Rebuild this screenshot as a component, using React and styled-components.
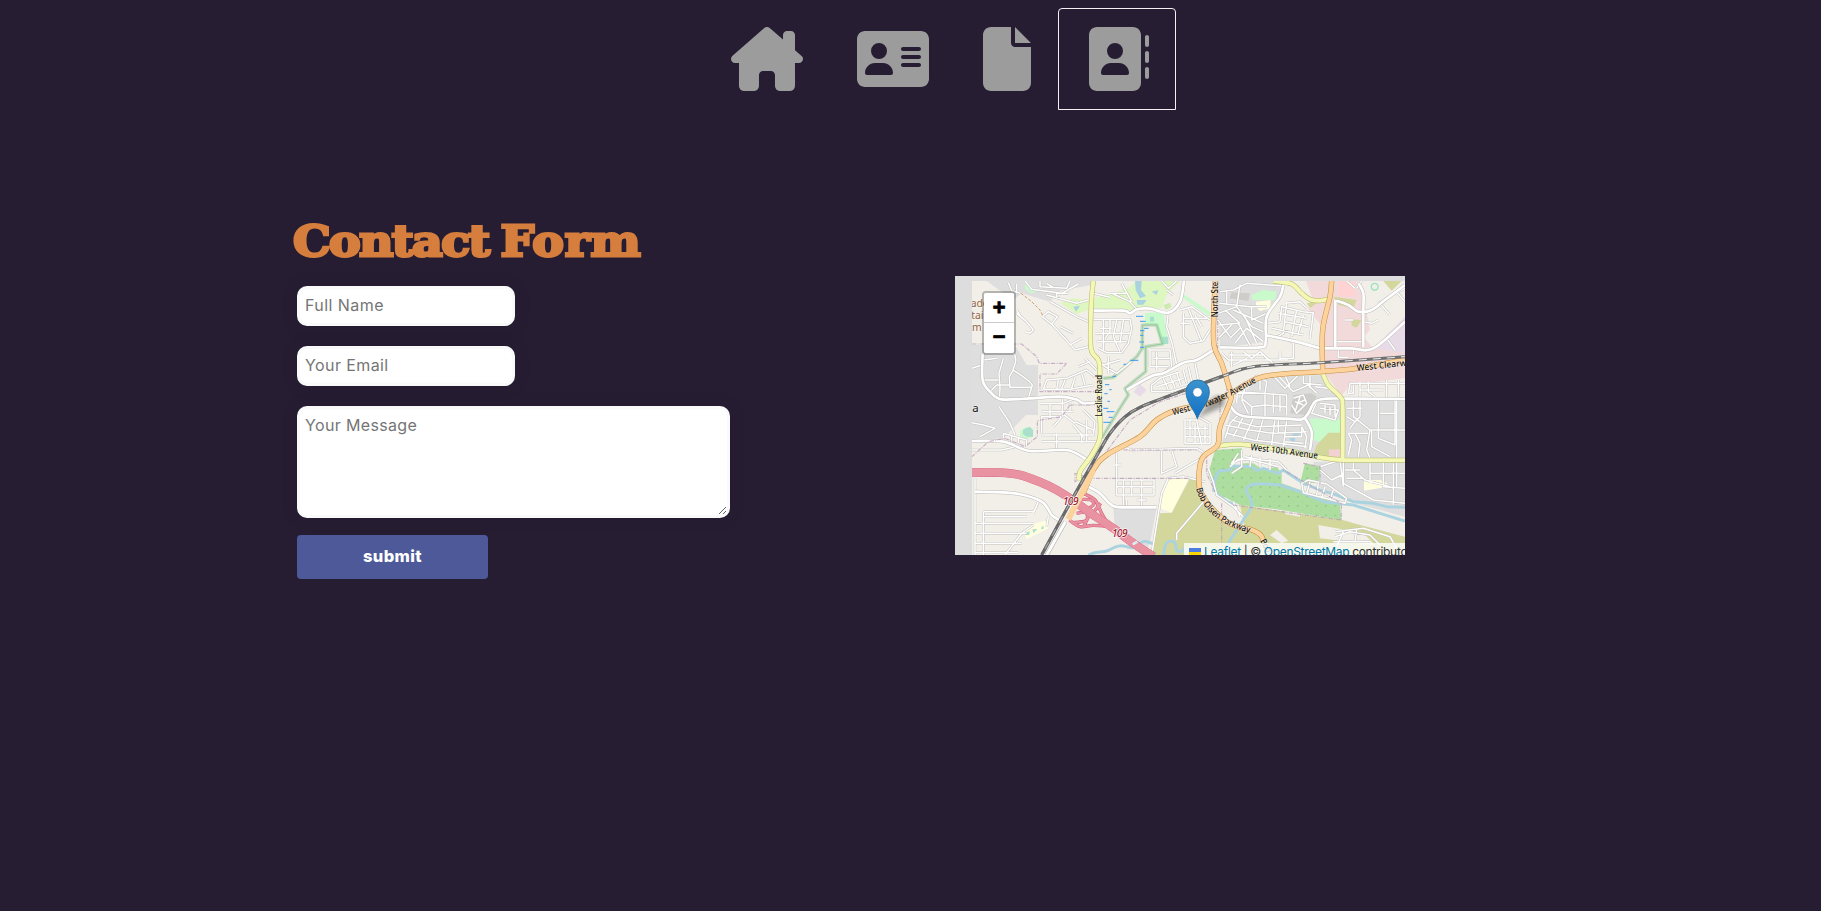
import React from "react";
import styled, { createGlobalStyle } from "styled-components";
import { FaHouseChimney, FaAddressCard, FaFile, FaAddressBook } from "react-icons/fa6";

const GlobalStyle = createGlobalStyle`
  * { box-sizing: border-box; }
  html, body { margin: 0; background: #271d33; }
  body { font-family: Inter, "Liberation Sans", sans-serif; overflow: hidden; }
`;

const Page = styled.div`
  min-height: 911px;
  background: #271d33;
`;

const Nav = styled.nav`
  display: flex;
  padding: 8px 0 0 704px;
`;

const NavLink = styled.a`
  display: flex;
  padding: 18px 26px;
  border: 1px solid ${(p) => (p.$active ? "#f4f2f5" : "transparent")};
  border-radius: 4px 4px 0 0;
  color: #9c9c9c;
  svg { display: block; height: 64px; width: ${(p) => p.$width}px; }
`;

const Main = styled.main`
  display: flex;
  align-items: flex-start;
  padding: 108px 0 0 293px;
`;

const FormColumn = styled.section`
  width: 662px;
`;

const Title = styled.h1`
  width: max-content;
  margin: 0;
  height: 68px;
  white-space: nowrap;
  font: 700 42px/47px "DejaVu Serif", serif;
  word-spacing: -4px;
  color: #d67e3d;
  -webkit-text-stroke: 2.8px #d67e3d;
  transform: scaleX(1.13);
  transform-origin: left;
`;

const Word = styled.span`
  letter-spacing: ${(p) => p.$tracking};
`;

const Form = styled.form`
  display: flex;
  flex-direction: column;
  align-items: flex-start;
  padding-left: 4px;
`;

const fieldStyle = `
  display: block;
  border: 3px solid #fafafa;
  border-radius: 10px;
  background: #fff;
  outline: none;
  box-shadow: 0 0 15px 4px rgba(0, 0, 0, 0.06);
  font: 400 16px/24px Inter, sans-serif;
  &::placeholder { color: #757575; opacity: 1; }
`;

const Input = styled.input`
  ${fieldStyle}
  width: 218px;
  height: 40px;
  margin-bottom: 20px;
  padding: 0 5px 2px;
  letter-spacing: ${(p) => p.$tracking};
`;

const Message = styled.textarea`
  ${fieldStyle}
  width: 433px;
  height: 112px;
  margin-bottom: 17px;
  padding: 4px 5px;
  letter-spacing: 0.35px;
  resize: both;
`;

const Submit = styled.button`
  width: 191px;
  height: 44px;
  padding: 0 0 2px;
  border: 0;
  border-radius: 4px;
  background: #4d5998;
  color: #fff;
  font: 800 16.5px/24px Inter, sans-serif;
  letter-spacing: 0.4px;
`;

const MapFrame = styled.div`
  position: relative;
  width: 450px;
  height: 279px;
  margin-top: 58px;
  overflow: hidden;
  background: #ddd;
`;

const MapSvg = styled.svg`
  display: block;
  width: 450px;
  height: 279px;
`;

const Zoom = styled.div`
  position: absolute;
  left: 27px;
  top: 15px;
  width: 34px;
  border: 2px solid rgba(0, 0, 0, 0.25);
  border-radius: 4px;
  background-clip: padding-box;
`;

const ZoomButton = styled.button`
  display: flex;
  align-items: center;
  justify-content: center;
  width: 30px;
  height: 30px;
  padding: ${(p) => (p.$first ? "3px 0 0" : "1px 0 0")};
  border: 0;
  border-bottom: ${(p) => (p.$first ? "1px solid #ccc" : "0")};
  border-radius: ${(p) => (p.$first ? "2px 2px 0 0" : "0 0 2px 2px")};
  background: #fff;
  color: #000;
  font: bold 22px/27px "Liberation Mono", monospace;
  -webkit-text-stroke: 0.8px #000;
`;

const Attribution = styled.div`
  position: absolute;
  left: 229px;
  top: 267px;
  display: flex;
  align-items: center;
  gap: 3px;
  height: 18px;
  padding: 0 5px;
  background: rgba(255, 255, 255, 0.8);
  color: #333;
  font: 400 12px/18px Inter, sans-serif;
  white-space: nowrap;
  letter-spacing: -0.3px;
  word-spacing: -0.2px;
  a { color: #0078a8; }
`;

const Flag = styled.svg`
  width: 12px;
  height: 8px;
  flex: none;
`;

/* Turns "x y x y ..." into a smooth path through every point. */
function curve(points) {
  const n = points.trim().split(/\s+/).map(Number);
  const p = [];
  for (let i = 0; i < n.length; i += 2) p.push([n[i], n[i + 1]]);
  let d = `M${p[0].join(" ")}`;
  for (let i = 0; i < p.length - 1; i++) {
    const a = p[i - 1] || p[i];
    const b = p[i];
    const c = p[i + 1];
    const e = p[i + 2] || c;
    d += `C${b[0] + (c[0] - a[0]) / 6} ${b[1] + (c[1] - a[1]) / 6} ${c[0] - (e[0] - b[0]) / 6} ${c[1] - (e[1] - b[1]) / 6} ${c[0]} ${c[1]}`;
  }
  return d;
}

/* Land cover: [fill, outline path]; map units are a third of a pixel. */
const LAND = [
  ["#dedede", "M66 225H195L230 285H264V435H228L160 505L66 510Z M110 33H425V45L330 62L300 95L215 70L190 90Z"],
  ["#dedede", "M803 33H975L1000 60L950 120L945 215L810 235Z M850 400L930 318L1112 316L1175 385V565L1085 560L815 520Z M1180 385H1365V740L1180 690L1105 650L1090 575H1180Z M490 712H620L600 820L585 850L495 785Z"],
  ["#f2dada", "M1068 33H1225L1250 130L1260 180L1240 200L1270 235H1365V325L1200 345L1175 378L1140 330L1110 300L1125 180L1075 120L1085 80Z"],
  ["#ffd3d2", "M1165 33H1212V80H1165Z"],
  ["#e8dbe8", "M1270 235L1365 140V250Z M570 342L590 360L570 380L550 365Z"],
  ["#def6c0", "M330 100L365 85L410 90L490 70L540 50L560 33H690L650 75L635 115L540 120L430 115L380 132Z"],
  ["#c8facc", "M690 65L780 125V140L700 85Z M905 75L940 60L980 65L976 90L905 90Z M225 42L260 65L245 70L225 58Z M585 130L640 125L655 220L635 228L620 165L585 162Z M1080 445L1170 448V490L1125 520L1088 510Z M210 483L230 470L250 478V500L225 507L210 498Z"],
  ["#d3d79c", "M720 625L745 630L760 680L840 755L930 780L965 820L1045 819L1110 790L1105 765L1160 745L1365 805V855H605L630 730L665 728Z M870 705L1174 750L1365 800V855H900Z M1100 525L1135 488H1170V565L1090 555Z M1150 80L1220 90L1210 115L1165 105Z M1205 148L1235 150L1220 173L1205 167Z M1300 33H1355L1325 62Z M1070 100L1110 92L1080 114Z"],
  ["#f2efe9", "M1105 765L1160 775L1240 790L1275 825L1110 805Z M1010 720L1050 718V740L1005 732Z M980 780L1015 812L995 820L960 795Z"],
  ["#addea0", "M795 540L875 535V560L835 600L880 580H910L940 600L980 590L995 610V640L1170 703L1174 750L1050 730L980 718L870 705L800 670L775 610Z M1065 580L1110 590L1107 638L1050 640Z"],
  ["#ffffe0", "M650 623L715 627L665 728L630 715Z M918 95L962 90L960 115L930 123L918 110Z M1242 630H1290L1312 640L1305 652L1242 662Z M222 790L240 765L285 752L295 775L230 808Z"],
  ["#aadfcb", "M220 478L240 470L249 480V500H230L218 492Z M224 790L240 784L237 795H226Z M247 778L262 777L250 790Z M275 770L281 768V776L273 778Z M600 140H612V155H600Z M635 200H655V222H640Z"],
  ["#aad3df", "M555 33H575L573 60L588 78L570 85L557 60Z M560 90H590L580 104H562Z M605 65L625 60L620 75Z M370 110L390 107L378 125Z M1007 495L1020 502L1030 492L1055 488L1035 502V523H1025L1020 508Z"],
  ["#cfcdca", "M845 67L900 70L895 93L838 85Z M1030 375L1085 370L1100 380L1065 435L1020 430Z"],
  ["#cdebb0", "M915 365L928 368L920 378Z M640 105L660 98L665 110L648 120Z"],
  ["#f3d1d3", "M1137 538H1170V560H1137Z"],
];

const WATER = [
  "M415 855C440 842 455 850 475 841S500 825 520 828S550 840 565 825S585 812 610 822M640 855L645 830C650 805 680 810 678 830S700 850 705 830",
  "M790 665C795 640 790 620 810 602L840 600L850 588L905 590L920 602L940 595L960 602L985 610L1000 600L1060 640L1115 662L1160 675L1210 695L1270 700L1310 710L1365 712",
  "M790 640L800 670L830 695L850 700M820 850L840 810L900 720C920 690 880 670 890 655S920 638 990 645L1050 665L1120 695L1210 705L1290 730L1365 753",
];

const MINOR = [
  // north west
  "M66 295L95 285M190 250C210 270 185 295 190 300S240 330 247 345L235 385M190 300L178 320L180 352H247M148 390L150 355L147 310L160 265M66 458L100 465L135 475L90 500M147 410L180 460L195 495M100 270L142 265M98 330L145 330M120 365L140 345H180",
  "M175 38L185 62L210 70M200 42V65M225 33L245 58L335 70L385 42M270 33V50L350 55L360 33M290 40L310 52M300 95L380 140L415 155M290 75L380 100L415 90M320 85V70H355",
  "M200 130L230 155L250 180L240 190L225 185M200 120L215 145M277 140L295 125L322 140L305 162L277 140M305 162L340 200L362 225L375 240L415 230M330 170L370 190M360 225L395 205",
  "M430 148H540L545 175L535 220L515 248H470L445 235M460 150V240M480 150V185L465 205M500 150L490 200L510 245M520 150L510 220M435 190H540M440 215H530M450 175L485 175M435 265L465 290L500 310L545 275M460 285L510 270M475 310V260",
  "M280 358L290 330L350 325L410 300L435 320M345 330L335 355M375 322L365 355M395 310L405 345M280 358H360L430 345M325 330L320 360M385 290L420 275M405 265L440 300M270 400H340L370 388M275 425H370M337 375V430L375 460M360 400V425M300 400V450M275 490V440H340M340 435L310 470M275 495H430L435 455L400 420M370 465L400 500M275 515H440M320 490V545M375 455L430 480M410 450V515M395 490V520",
  // centre north
  "M490 72L540 95L560 118M515 40L545 95M480 70L530 70M655 128L650 170L665 215L680 285M430 70L480 82M635 33L655 55L680 33M650 60L670 75",
  "M700 130V200L720 220L760 212L780 180M700 145H770M715 115L755 215M690 120L725 110L780 150M735 135L755 170M690 160H720M600 240H660L665 290L640 310M600 290V242M620 245V300M610 265H660M600 290H655",
  "M605 365V345L630 325L690 305M620 350L700 325M605 365H660L750 340M640 325L655 360M660 318L675 352M680 308L692 345M700 300L710 340M715 290L725 335M735 280L745 330",
  // north east
  "M810 65L850 60L890 40L1000 48M808 100L900 110L950 110M830 60V105M870 45L860 110M805 130L860 110L905 170L940 185M805 165L865 160L905 235M825 120L870 160M805 205L845 165M840 205L870 175M850 120L940 160M905 110V150L950 130M855 220L890 175L940 215M885 140L920 220M800 145L840 200",
  "M950 160L990 155L995 110L1060 125L1090 128L1080 205M985 130L1070 145M1010 95L1000 190L975 205M1005 100L1050 95L1070 115M1040 120L1025 200M1060 135L1045 190M965 175L1060 195M1005 155L1075 170M1015 210L1030 220V265H990M1015 270H835L815 250M845 245V290M880 245L905 265L930 245L980 290M835 255H940L955 270M850 285L890 265M990 245V270",
  "M1155 215H1240M1190 33L1215 55M1235 33L1220 55M1285 95L1320 135M1240 155L1265 160L1285 150M1310 205L1335 240M1340 65L1365 95M1185 150H1210M1165 240V262H1195M1210 235V252M1325 75L1365 55",
  // blocks east of the parkway
  "M860 400L862 365L885 350L920 318L950 335L945 370H855M860 365L1010 375V435M885 355L875 385L905 410L945 405V370M945 405L1010 410M970 370V430M990 375V425M875 390L895 430M905 410V440M945 405V440M930 318V360",
  "M970 318L1005 355L1045 316M985 318L1030 365L1075 345L1100 370M1005 316L1020 350M1060 318V340L1115 345M1080 318V355M1095 350L1135 355",
  "M825 505L840 460L865 435M850 500L880 440M825 465L900 480L970 490L1070 485M845 450L920 470L1055 465M880 510L910 445M920 515L940 445M965 525L975 445M1000 530L1010 450M830 490L910 510L1070 530M1055 470L1070 500L1065 535M985 450V490M1005 500H1055V470M1005 515L1060 520",
  "M1030 385L1060 375L1070 400L1040 430L1025 405M1035 395L1060 405M1050 380L1035 425M1040 400L1065 390M1100 395L1085 430L1155 450L1165 420L1110 415M1110 400L1155 405V440M1125 405V430M1140 410V435",
  "M1195 372L1200 340H1365M1210 345V370H1195M1230 335V440L1215 455M1255 335V365L1275 380M1310 330V385M1345 330V380M1230 360H1300M1285 390V505L1335 525V390M1340 390V650M1210 390V440L1260 480H1365M1190 415H1235M1190 440L1215 455L1200 475M1260 480L1250 540L1260 565M1195 490L1205 510L1195 555M1215 490L1230 520L1225 560M1195 490H1255M1290 430H1335M1265 480V530L1320 560",
  "M1180 575V640L1270 690L1365 700M1110 590L1170 570L1180 650M1210 575V600L1245 630L1320 650M1260 580V640M1300 575V650L1365 655M1330 580V705M1185 600H1230M1190 625H1240M1055 640L1075 630L1130 642L1190 685L1185 700L1060 668L1055 640M1080 635L1070 670M1105 640L1100 675M1125 650L1115 685M1150 660L1140 690M1110 600L1145 630L1175 615M1260 610H1365",
  // south
  "M66 540H155L220 525M160 490L230 510L230 528M160 490V515M185 500V525M205 500V520M75 625V855M265 695L250 730M100 725H250L260 710M100 725V855M75 760H250M75 790H230M75 820H215M75 848H205M100 740H230M250 765L215 790L165 855M295 740L290 770",
  "M500 630H612V675H500V630M520 630V710M545 630V675M575 630V710M500 650H612M530 690V712M560 690H590M605 855L635 670L655 625L700 620L765 635M530 535L545 540L740 535L765 550M500 550V630M635 540V610L680 590L665 540M675 610L765 558M705 450V520H780V460L745 440M705 450L740 450L755 525M720 450V500M735 465V520M765 465V520M705 475H775M705 500H780M680 810V790L765 690M495 585H515",
  "M875 540V590L845 610M865 550L845 580L880 565M885 560L935 570L985 575M905 555L900 590M930 560V590M960 565V600M985 575L1010 600M840 590L865 568H900L985 590M775 595L790 635L800 675L850 710L880 740M850 695L870 740M1155 800L1200 785L1260 795L1290 825M1155 785L1240 775L1320 800L1340 835M1150 815H1260M1180 785L1160 830M1220 780L1215 815",
];

const MAJOR_WHITE = [
  "430 122 520 122 540 130 560 118 600 116 655 128 690 95 702 33",
  "840 405 860 430 900 441 1010 446 1055 448 1075 430 1095 395 1130 386 1200 386 1365 387",
  "1065 445 1085 485 1080 540",
  "98 250 98 330 120 365 155 388 240 385 330 380 378 388 400 400 435 398",
  "530 360 605 318 640 310 700 278 740 270 790 240",
  "810 232 930 232 947 215 950 140 990 80 1000 45",
  "945 195 1040 215 1110 235",
  "1110 235 1200 235 1270 235 1365 155",
  "1156 90 1156 160 1156 235",
  "1160 92 1195 105 1225 125 1265 120 1305 90 1365 45",
  "1225 40 1240 70 1240 120 1240 232",
  "66 513 160 515 240 543 350 540 410 568",
  "415 650 450 670 490 708 550 712 620 712",
  "75 665 195 670 275 695 305 735 330 752",
].map(curve).join("");
const YELLOW = curve("430 33 424 100 423 235 448 280 448 400 450 500 425 555 390 605 388 632") + curve("970 33 1025 42 1055 70 1080 88 1110 92 1140 86") + curve("1118 310 1135 345 1170 380 1178 410 1178 565") + curve("805 528 870 523 1000 540 1100 560 1180 570 1270 571 1365 571");
const ORANGE = curve("400 670 430 600 470 555 570 500 620 450 680 420 780 398 840 372 940 320 1115 305 1220 295 1365 270") + curve("796 33 792 120 792 225 815 280 835 345 843 385 810 470 803 525 760 560 748 600 752 665 800 730 850 765 900 778 932 795 940 815") + curve("1145 33 1140 80 1118 180 1118 305");
const RAIL = curve("275 855 365 690 450 540 480 490 520 445 570 412 700 362 820 318 910 290 1110 278 1365 260");
const FREIGHT = curve("275 855 365 690 450 540 480 490 520 445 570 412 700 362 820 318");
const MOTORWAY = curve("50 607 150 608 210 615 270 636 320 660 370 692 430 735 490 775 550 820 610 860");
const RAMPS = curve("400 670 435 690 455 730 475 765") + curve("358 750 390 770 430 766 480 770") + curve("395 688 423 690 430 705 405 720") + curve("380 730 408 728 408 752 365 758") + curve("452 700 430 727") + curve("418 735 402 768");
const BOUNDARY = "M66 222H215L260 260L268 280H350L320 312H270V365H440M360 405H435M360 405L335 440L262 452V500L225 530L165 505L115 515L66 560M790 235L825 310L740 360L630 395L540 450L420 610L375 635L375 610L420 625H720M520 540H740M770 545V610L795 665M815 700V855M850 705L1174 750V700L1000 600M803 33V235M835 350L810 400V520M1060 580L1110 590V640";
const GREENWAY = "M460 325L490 322L560 260L577 235V165H620L637 222L587 230V305L525 355L535 375L500 430L455 505";

const LABELS = [
  { id: "leslie", d: "M457 440V305", text: "Leslie Road", len: 125 },
  { id: "north", d: "M803 142V33", text: "North Ste", len: 107 },
  { id: "clearA", d: "M670 436L724 422", text: "West", len: 53 },
  { id: "clearB", d: "M768 412L842 378L935 328", text: "rwater Avenue", len: 170 },
  { id: "clearC", d: "M1221 303L1430 281", text: "West Clearwater", len: 200 },
  { id: "tenth", d: "M901 540L1000 552L1115 568", text: "West 10th Avenue", len: 203 },
  { id: "olsen", d: "M738 656C755 715 800 752 850 772S895 787 930 800", text: "Bob Olsen Parkway", len: 218 },
  { id: "bob", d: "M930 813L955 860", text: "Bob", len: 42 },
];

function Road({ d, width, fill, casing, edge = 3 }) {
  return (
    <>
      <path d={d} stroke={casing} strokeWidth={width + edge} />
      <path d={d} stroke={fill} strokeWidth={width} />
    </>
  );
}

function TownMap() {
  return (
    <MapSvg viewBox="15 18 1350 837" fill="none" strokeLinejoin="round">
      <defs>
        <clipPath id="tiles"><path d="M66 33H1365V855H66Z" /></clipPath>
        <pattern id="scrub" width="28" height="28" patternUnits="userSpaceOnUse">
          <circle cx="8" cy="8" r="1.8" fill="#5a9b58" /><circle cx="22" cy="22" r="1.3" fill="#75b36f" />
        </pattern>
        <linearGradient id="pin" x2="0" y2="1"><stop stopColor="#3d94cc" /><stop offset="1" stopColor="#126fc6" /></linearGradient>
        <filter id="soft"><feGaussianBlur stdDeviation="6" /></filter>
        {LABELS.map(({ id, d }) => <path key={id} id={id} d={d} />)}
      </defs>
      <g clipPath="url(#tiles)">
        <path d="M66 33H1365V855H66Z" fill="#f2efe9" />
        {LAND.map(([fill, d], i) => <path key={i} d={d} fill={fill} />)}
        <path d={LAND[9][1]} fill="url(#scrub)" />
        <path d={GREENWAY} stroke="#72bd7d" strokeOpacity=".35" strokeWidth="11" />
        <path d={GREENWAY} stroke="#6fae79" strokeOpacity=".5" strokeWidth="3" />
        <path d="M558 139H580M570 154H587M570 182H583M582 175H596M570 196H580M568 216H582M570 232H583M540 271H565M520 283H532M487 319H498M465 344H478M478 359H485M463 371H473M472 394H480M460 415H475M470 425H493M460 457H482M476 442H488" stroke="#3a9cec" strokeWidth="3" />
        {WATER.map((d) => <path key={d} d={d} stroke="#aad3df" strokeWidth="9" />)}
        <Road d={MINOR.join("")} width={4.5} fill="#fff" casing="#c2c0bd" />
        <Road d={MAJOR_WHITE} width={8} fill="#fff" casing="#bdbbb8" />
        <path d={BOUNDARY} stroke="#b89bb8" strokeOpacity=".75" strokeWidth="3.5" strokeDasharray="13 4 3 4" />
        <path d="M213 70L245 95L270 120L280 140" stroke="#d3a06e" strokeWidth="3" strokeDasharray="9 5" />
        <Road d={RAMPS} width={7} fill="#e892a2" casing="#d45b76" />
        <Road d={MOTORWAY} width={24} fill="#e892a2" casing="#d8677f" edge={2} />
        <Road d={YELLOW} width={12} fill="#f4f8b4" casing="#b2b56b" />
        <Road d="M346 755L290 855" width={9} fill="#fff" casing="#b7b5b1" edge={4} />
        <Road d={ORANGE} width={13} fill="#fcd39d" casing="#c48b3c" />
        <path d="M355 748L430 600" stroke="#fcd39d" strokeWidth="18" />
        <path d={RAIL} stroke="#707070" strokeWidth="9" />
        <path d={RAIL} stroke="#e4e4e4" strokeWidth="3.5" strokeDasharray="24 18" />
        <path d={FREIGHT} stroke="#707070" strokeWidth="9" />
        <path d={FREIGHT} stroke="#ddd" strokeWidth="1.8" />
        <path d={FREIGHT} stroke="#666" strokeWidth="5" strokeDasharray="22 22" />
        <path d="M548 823L562 815" stroke="#d7eef3" strokeWidth="8" />
        <circle cx="1274" cy="50" r="10" stroke="#9be4bb" strokeWidth="4" />

        <g fontFamily="Noto Sans, sans-serif" fontSize="27" fontWeight="500" fill="#111" stroke="#fff" strokeOpacity=".5" strokeWidth="3" paintOrder="stroke">
          {LABELS.map(({ id, text, len }) => (
            <text key={id} textLength={len} lengthAdjust="spacingAndGlyphs">
              <textPath href={`#${id}`} textLength={len} lengthAdjust="spacingAndGlyphs">{text}</textPath>
            </text>
          ))}
          <text x="67" y="427" fontSize="34" fontWeight="400">a</text>
          <g fill="#8f623d" fontSize="31" fontWeight="400">
            <text x="62" y="112">adg</text><text x="64" y="147">tai</text><text x="66" y="183">m</text>
          </g>
          <g fill="#a01c30" fontSize="32" fontStyle="italic" strokeOpacity="1" strokeWidth="4">
            <text x="338" y="704" textLength="48">109</text><text x="485" y="800" textLength="48">109</text>
          </g>
        </g>
      </g>
      <path d="M742 444L778 395C805 360 840 385 815 412Z" fill="#000" fillOpacity=".35" filter="url(#soft)" />
      <path d="M742 446C734 420 708 397 708 365A34.5 34.5 0 0 1 778 365C778 397 750 420 742 446Z" fill="url(#pin)" stroke="#2874aa" strokeWidth="3" />
      <circle cx="742.5" cy="367" r="14" fill="#fff" stroke="#2d78b0" strokeWidth="2" />
    </MapSvg>
  );
}

const LINKS = [
  { label: "Home", Icon: FaHouseChimney, width: 72 },
  { label: "About", Icon: FaAddressCard, width: 72 },
  { label: "Resume", Icon: FaFile, width: 48 },
  { label: "Contact", Icon: FaAddressBook, width: 64, active: true },
];

export default function App() {
  return (
    <Page>
      <GlobalStyle />
      <Nav>
        {LINKS.map(({ label, Icon, width, active }) => (
          <NavLink key={label} aria-label={label} $width={width} $active={active}><Icon /></NavLink>
        ))}
      </Nav>
      <Main>
        <FormColumn>
          <Title>
            <Word $tracking="-1.5px">Contact</Word> <Word $tracking="0.6px">Form</Word>
          </Title>
          <Form>
            <Input placeholder="Full Name" $tracking="0.45px" />
            <Input placeholder="Your Email" $tracking="0.4px" />
            <Message placeholder="Your Message" />
            <Submit type="button">submit</Submit>
          </Form>
        </FormColumn>
        <MapFrame>
          <TownMap />
          <Zoom>
            <ZoomButton $first>+</ZoomButton>
            <ZoomButton>−</ZoomButton>
          </Zoom>
          <Attribution>
            <Flag viewBox="0 0 12 8"><path fill="#4c7be1" d="M0 0h12v4H0z" /><path fill="#ffd500" d="M0 4h12v4H0z" /></Flag>
            <span><a>Leaflet</a> | © <a>OpenStreetMap</a> contributors</span>
          </Attribution>
        </MapFrame>
      </Main>
    </Page>
  );
}
